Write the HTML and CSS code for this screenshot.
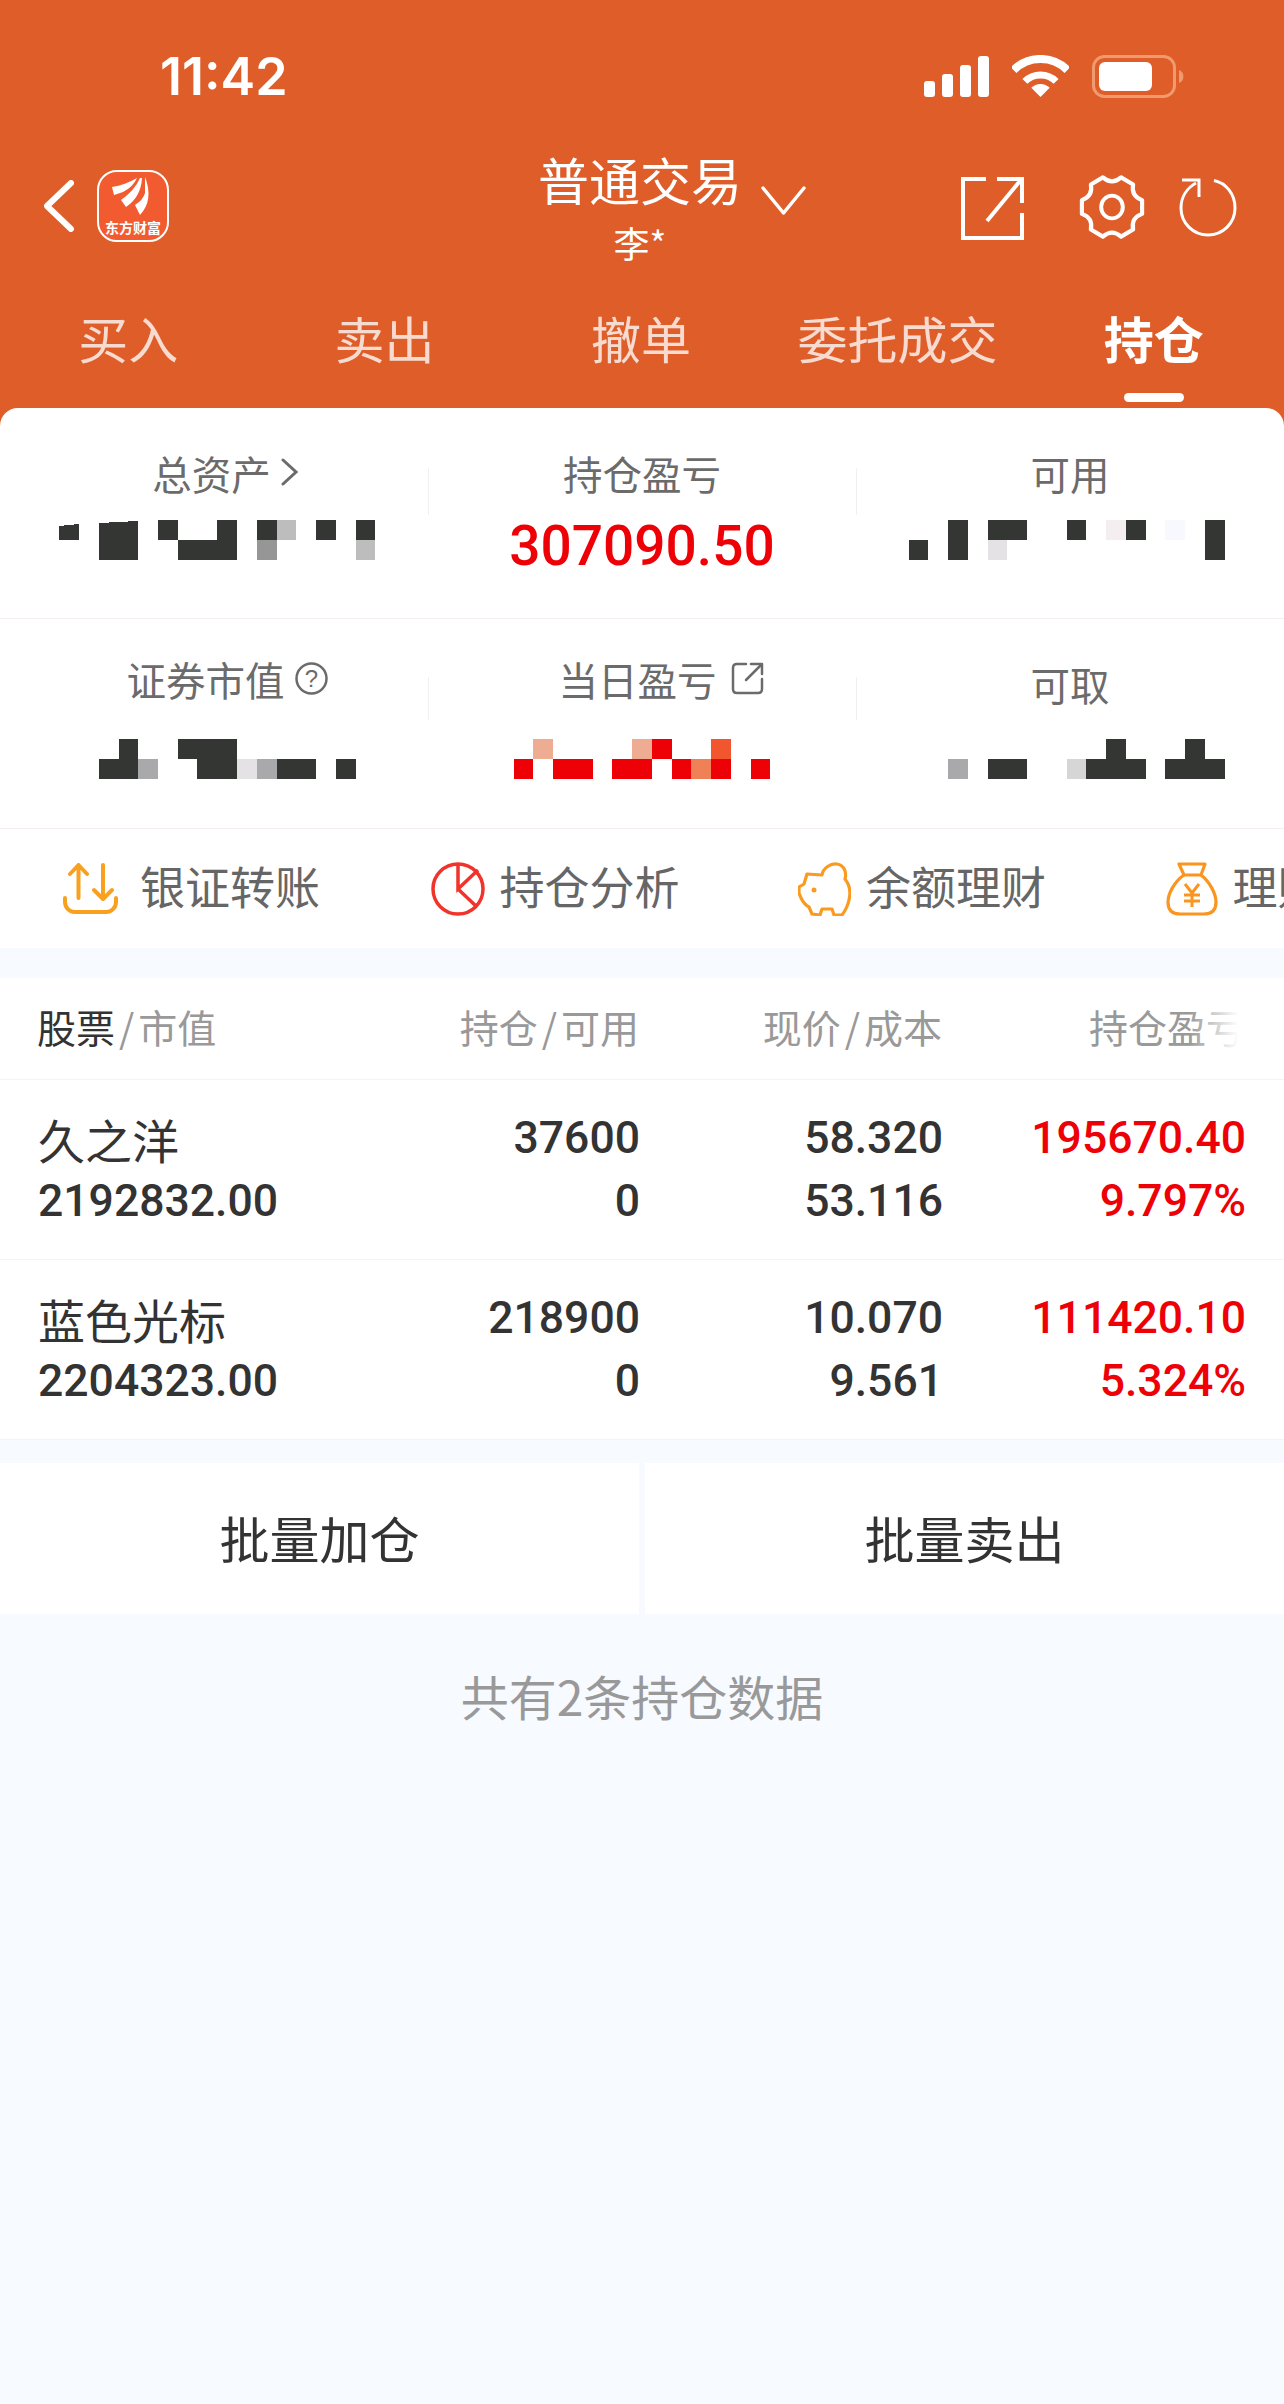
FILE: index.html
```html
<!DOCTYPE html>
<html lang="zh-CN">
  <head>
    <meta charset="utf-8">
    <title>持仓</title>
    <link rel="stylesheet" href="styles.css">
  </head>
  <body>
    <header class="top">
      <div class="status">
        <span class="time">11:42</span>
        <svg class="signal" width="65" height="41" viewBox="0 0 65 41" fill="#fff">
          <rect x="0" y="25" width="11" height="16" rx="3"/>
          <rect x="18" y="18" width="11" height="23" rx="3"/>
          <rect x="36" y="9" width="11" height="32" rx="3"/>
          <rect x="54" y="0" width="11" height="41" rx="3"/>
        </svg>
        <svg class="wifi" width="57" height="42" viewBox="0 0 57 42" fill="none" stroke="#fff">
          <path d="M1.6 15.1A38 38 0 0 1 55.4 15.1" stroke-width="8"/>
          <path d="M12.9 26.4A22 22 0 0 1 44.1 26.4" stroke-width="7"/>
          <path d="M28.5 42L19.3 32.8A13 13 0 0 1 37.7 32.8Z" fill="#fff" stroke="none"/>
        </svg>
        <svg class="battery" width="93" height="43" viewBox="0 0 93 43">
          <rect x="1.5" y="1.5" width="81" height="40" rx="11" fill="none" stroke="#f09a70" stroke-width="3"/>
          <rect x="7" y="7" width="53" height="29" rx="6" fill="#fff"/>
          <path d="M87 15a7 7 0 0 1 0 13z" fill="#f09a70"/>
        </svg>
      </div>

      <div class="nav">
        <div class="nav-left">
          <svg width="30" height="52" viewBox="0 0 30 52" fill="none" stroke="#fff" stroke-width="6" stroke-linecap="round" stroke-linejoin="round">
            <path d="M27 3L3 26L27 49"/>
          </svg>
          <div class="logo">
            <svg width="68" height="46" viewBox="2 2 68 46" fill="#fff">
              <path d="M15 17Q28 15 40 8Q36 17 26 22L17 25Z"/>
              <path d="M43 8Q38 20 24 30L29 37Q44 27 45 8Z"/>
              <path d="M48 7Q48 16 48 23Q46 30 38 35L43 45Q57 30 48 7Z"/>
            </svg>
            <span class="logo-name">东方财富</span>
          </div>
        </div>
        <div class="nav-title">
          <div class="title">普通交易</div>
          <div class="user">李*</div>
        </div>
        <div class="nav-right">
          <svg class="title-arrow" width="45" height="29" viewBox="0 0 45 29" fill="none" stroke="#fff" stroke-width="3.5" stroke-linecap="round" stroke-linejoin="round">
            <path d="M2 2L22.5 27L43 2"/>
          </svg>
          <svg class="share" width="63" height="63" viewBox="0 0 63 63" fill="none" stroke="#fff" stroke-width="4">
            <path d="M25 2H2V61H61V36"/>
            <path d="M36 2H61V26"/>
            <path d="M26 44L59 4"/>
          </svg>
          <svg class="gear" width="68" height="66" viewBox="-32 -32 64 64" fill="none" stroke="#fff" stroke-width="4" stroke-linejoin="round">
            <path d="M29.2 -6.7L29.2 6.7Q18.2 10.5 20.5 21.9L8.8 28.7Q0 21 -8.8 28.7L-20.5 21.9Q-18.2 10.5 -29.2 6.7L-29.2 -6.7Q-18.2 -10.5 -20.5 -21.9L-8.8 -28.7Q0 -21 8.8 -28.7L20.5 -21.9Q18.2 -10.5 29.2 -6.7Z"/>
            <ellipse cx="0" cy="0" rx="10.5" ry="11" stroke-width="3.8"/>
          </svg>
          <svg class="refresh" width="58" height="60" viewBox="0 0 58 60" fill="none" stroke="#fff" stroke-width="3">
            <path d="M35 3.5C47 6 56 17 56 31C56 46 44 58 29 58C14 58 2 46 2 31C2 20 8 11 17 6"/>
            <path d="M3 3H20V20"/>
          </svg>
        </div>
      </div>

      <nav class="tabs">
        <div class="tab">买入</div>
        <div class="tab">卖出</div>
        <div class="tab">撤单</div>
        <div class="tab">委托成交</div>
        <div class="tab active">持仓</div>
      </nav>
    </header>

    <section class="assets">
      <div class="asset-row">
        <div class="cell">
          <div class="label shift-a">总资产
            <svg width="17" height="28" viewBox="0 0 17 28" fill="none" stroke="#6b6b6b" stroke-width="3" stroke-linecap="round">
              <path d="M2 2L15 14L2 26"/>
            </svg>
          </div>
          <svg class="blur" width="428" height="40" viewBox="0 0 428 40" shape-rendering="crispEdges">
            <path d="M59 6L79 4V20H59Z" fill="#343634"/>
            <path d="M99 3L138 1V40H99Z" fill="#343634"/>
            <rect x="158" y="0" width="20" height="20" fill="#343634"/>
            <rect x="178" y="20" width="59" height="20" fill="#343634"/>
            <rect x="217" y="0" width="20" height="20" fill="#343634"/>
            <rect x="257" y="0" width="20" height="20" fill="#343634"/>
            <rect x="257" y="20" width="20" height="20" fill="#959695"/>
            <rect x="277" y="0" width="19" height="20" fill="#bdbdbd"/>
            <rect x="316" y="0" width="20" height="20" fill="#343634"/>
            <rect x="356" y="0" width="19" height="20" fill="#343634"/>
            <rect x="356" y="20" width="19" height="20" fill="#bdbdbd"/>
          </svg>
        </div>
        <div class="cell">
          <div class="label">持仓盈亏</div>
          <div class="profit">307090.50</div>
        </div>
        <div class="cell">
          <div class="label">可用</div>
          <svg class="blur" width="428" height="40" viewBox="0 0 428 40" shape-rendering="crispEdges">
            <rect x="53" y="20" width="19" height="20" fill="#343634"/>
            <rect x="92" y="0" width="20" height="40" fill="#343634"/>
            <rect x="132" y="0" width="39" height="20" fill="#343634"/>
            <rect x="132" y="20" width="19" height="20" fill="#e5e2e6"/>
            <rect x="211" y="0" width="19" height="20" fill="#343634"/>
            <rect x="250" y="0" width="20" height="20" fill="#f5eef0"/>
            <rect x="270" y="0" width="20" height="20" fill="#343634"/>
            <rect x="309" y="0" width="20" height="20" fill="#f8f8ff"/>
            <rect x="349" y="0" width="20" height="40" fill="#343634"/>
          </svg>
        </div>
      </div>

      <div class="asset-row">
        <div class="cell">
          <div class="label shift-b">证券市值
            <svg width="33" height="33" viewBox="0 0 33 33">
              <circle cx="16.5" cy="16.5" r="15" fill="none" stroke="#6b6b6b" stroke-width="2.5"/>
              <text x="16.5" y="25" text-anchor="middle" class="help">?</text>
            </svg>
          </div>
          <svg class="blur" width="428" height="40" viewBox="0 0 428 40" shape-rendering="crispEdges">
            <rect x="119" y="0" width="19" height="20" fill="#343634"/>
            <rect x="178" y="0" width="59" height="20" fill="#343634"/>
            <rect x="99" y="20" width="39" height="20" fill="#343634"/>
            <rect x="138" y="20" width="20" height="20" fill="#a9a8aa"/>
            <rect x="197" y="20" width="40" height="20" fill="#343634"/>
            <rect x="237" y="20" width="20" height="20" fill="#e5e2e6"/>
            <rect x="257" y="20" width="20" height="20" fill="#a9a8aa"/>
            <rect x="277" y="20" width="39" height="20" fill="#343634"/>
            <rect x="336" y="20" width="20" height="20" fill="#343634"/>
          </svg>
        </div>
        <div class="cell">
          <div class="label shift-c">当日盈亏
            <svg width="33" height="33" viewBox="0 0 33 33" fill="none" stroke="#6b6b6b" stroke-width="2.5" stroke-linecap="round" stroke-linejoin="round">
              <path d="M15 2H6Q2 2 2 6V27Q2 31 6 31H27Q31 31 31 27V17"/>
              <path d="M20 2H31V12"/>
              <path d="M15 18L30 3"/>
            </svg>
          </div>
          <svg class="blur" width="428" height="40" viewBox="0 0 428 40" shape-rendering="crispEdges">
            <rect x="105" y="0" width="20" height="20" fill="#eeac93"/>
            <rect x="204" y="0" width="20" height="20" fill="#eeac93"/>
            <rect x="224" y="0" width="20" height="20" fill="#ee0007"/>
            <rect x="283" y="0" width="20" height="20" fill="#f2562f"/>
            <rect x="86" y="20" width="19" height="20" fill="#ee0007"/>
            <rect x="125" y="20" width="40" height="20" fill="#ee0007"/>
            <rect x="184" y="20" width="40" height="20" fill="#ee0007"/>
            <rect x="244" y="20" width="19" height="20" fill="#ee0007"/>
            <rect x="263" y="20" width="20" height="20" fill="#f08055"/>
            <rect x="283" y="20" width="20" height="20" fill="#ee0007"/>
            <rect x="323" y="20" width="19" height="20" fill="#ee0007"/>
          </svg>
        </div>
        <div class="cell">
          <div class="label label-low">可取</div>
          <svg class="blur" width="428" height="40" viewBox="0 0 428 40" shape-rendering="crispEdges">
            <rect x="92" y="20" width="20" height="20" fill="#a9a8aa"/>
            <rect x="132" y="20" width="39" height="20" fill="#343634"/>
            <rect x="211" y="20" width="19" height="20" fill="#d6d6d6"/>
            <rect x="230" y="20" width="60" height="20" fill="#343634"/>
            <rect x="250" y="0" width="20" height="20" fill="#343634"/>
            <rect x="309" y="20" width="60" height="20" fill="#343634"/>
            <rect x="329" y="0" width="20" height="20" fill="#343634"/>
          </svg>
        </div>
      </div>
    </section>

    <section class="shortcuts">
      <div class="shortcut first">
        <svg width="55" height="51" viewBox="0 0 55 51" fill="none" stroke="#f9a11f" stroke-width="4" stroke-linecap="round" stroke-linejoin="round">
          <path d="M15.5 3V35M7 11L15.5 2L24 11"/>
          <path d="M40 2V35M31 27L40 36L49 27"/>
          <path d="M2 35V39A10 10 0 0 0 12 49H43A10 10 0 0 0 53 39V35"/>
        </svg>
        <span>银证转账</span>
      </div>
      <div class="shortcut">
        <svg width="54" height="54" viewBox="0 0 54 54" fill="none" stroke="#f0342b" stroke-width="3.5">
          <circle cx="27" cy="27" r="25"/>
          <path d="M27 2V27L47 8M27 27L46 45"/>
        </svg>
        <span>持仓分析</span>
      </div>
      <div class="shortcut">
        <svg width="53" height="54" viewBox="0 0 53 54" fill="none" stroke="#fa9a1e" stroke-width="3.2" stroke-linejoin="round">
          <path d="M9 12L24 13C25 6 33 1 39 2C46 3 49 10 47 17C51 22 53 30 51 38C50 43 47 49 44 53L36 53L34 47L24 47L22 53L14 52L11 45C7 43 5 40 3 36L1 31L1 25L6 22Z"/>
          <circle cx="16" cy="28" r="2.5" fill="#fa9a1e" stroke="none"/>
        </svg>
        <span>余额理财</span>
      </div>
      <div class="shortcut">
        <svg width="52" height="54" viewBox="0 0 52 54" fill="none" stroke="#fa9520" stroke-width="3.2" stroke-linejoin="round">
          <path d="M13 2H39L35 13H18Z"/>
          <path d="M18 13C8 20 2 32 2 40C2 48 6 52 14 52H38C46 52 50 48 50 40C50 32 44 20 35 13"/>
          <path d="M19 22L26 31L33 22M26 31V45M18 33H34M18 39H34" stroke-width="3"/>
        </svg>
        <span>理财产品</span>
      </div>
    </section>

    <section class="holdings">
      <div class="table-head">
        <div><b>股票</b><i>/</i>市值</div>
        <div class="num">持仓<i>/</i>可用</div>
        <div class="num">现价<i>/</i>成本</div>
        <div class="num fade">持仓盈亏</div>
      </div>
      <div class="stock">
        <div>
          <div class="name">久之洋</div>
          <div class="val">2192832.00</div>
        </div>
        <div class="num">
          <div class="val">37600</div>
          <div class="val">0</div>
        </div>
        <div class="num">
          <div class="val">58.320</div>
          <div class="val">53.116</div>
        </div>
        <div class="num red">
          <div class="val">195670.40</div>
          <div class="val">9.797%</div>
        </div>
      </div>
      <div class="stock">
        <div>
          <div class="name">蓝色光标</div>
          <div class="val">2204323.00</div>
        </div>
        <div class="num">
          <div class="val">218900</div>
          <div class="val">0</div>
        </div>
        <div class="num">
          <div class="val">10.070</div>
          <div class="val">9.561</div>
        </div>
        <div class="num red">
          <div class="val">111420.10</div>
          <div class="val">5.324%</div>
        </div>
      </div>
    </section>

    <div class="batch">
      <button class="batch-btn">批量加仓</button>
      <button class="batch-btn">批量卖出</button>
    </div>

    <p class="note">共有2条持仓数据</p>
  </body>
</html>
```

FILE: styles.css
```css
* {
  box-sizing: border-box;
}
body {
  margin: 0;
  min-height: 2404px;
  background-color: #f7faff;
  font-family: "Noto Sans CJK SC", "Liberation Sans", sans-serif;
  color: #333;
  overflow-x: hidden;
}

/* orange header */
.top {
  background-color: #df5d29;
  color: #fff;
  height: 428px;
}
.status {
  display: flex;
  align-items: center;
  height: 152px;
  padding-left: 160px;
}
.time {
  font-family: Inter, "Liberation Sans", sans-serif;
  font-size: 52px;
  font-weight: 600;
  width: 764px;
}
.wifi {
  margin-left: 23px;
}
.battery {
  margin-left: 23px;
}
.nav {
  display: grid;
  grid-template-columns: 534px 212px 1fr;
  height: 148px;
}
.nav-left {
  display: flex;
  align-items: flex-start;
  padding: 28px 0 0 44px;
}
.logo {
  width: 72px;
  height: 72px;
  margin: -10px 0 0 23px;
  border: 2px solid #fff;
  border-radius: 20px;
  background-color: #f25a30;
  overflow: hidden;
}
.logo svg {
  display: block;
}
.logo-name {
  display: block;
  font-size: 14px;
  line-height: 18px;
  font-weight: 700;
  text-align: center;
  white-space: nowrap;
}
.title {
  font-size: 51px;
  line-height: 54px;
  text-align: center;
  white-space: nowrap;
}
.user {
  font-size: 36px;
  line-height: 40px;
  margin-top: 16px;
  text-align: center;
}
.nav-right {
  display: flex;
  align-items: flex-start;
  padding: 25px 0 0 15px;
}
.title-arrow {
  margin-top: 9px;
}
.share {
  margin-left: 155px;
}
.gear {
  margin-left: 54px;
  margin-top: -3px;
}
.refresh {
  margin-left: 33px;
}
.tabs {
  display: grid;
  grid-template-columns: repeat(5, 1fr);
  padding-right: 2px;
}
.tab {
  font-size: 50px;
  line-height: 74px;
  text-align: center;
  color: rgba(255, 255, 255, 0.78);
}
.tab.active {
  color: #fff;
  font-weight: 700;
}
.tab.active::after {
  content: "";
  display: block;
  width: 60px;
  height: 9px;
  margin: 19px auto 0;
  border-radius: 5px;
  background-color: #fff;
}

/* totals card */
.assets {
  position: relative;
  margin-top: -20px;
  border-radius: 18px 18px 0 0;
  background-color: #fff;
}
.asset-row {
  display: grid;
  grid-template-columns: repeat(3, 428px);
  height: 211px;
  padding-top: 39px;
  border-bottom: 1px solid #f5eef0;
}
.asset-row + .asset-row {
  height: 210px;
  padding-top: 34px;
}
.cell {
  position: relative;
}
.cell + .cell::before {
  content: "";
  position: absolute;
  left: 0;
  top: 21px;
  width: 1px;
  height: 47px;
  background-color: #f0f0f0;
}
.asset-row + .asset-row .cell + .cell::before {
  top: 24px;
  height: 43px;
}
.label {
  display: flex;
  justify-content: center;
  align-items: center;
  gap: 10px;
  height: 50px;
  font-size: 39.5px;
  color: #6b6b6b;
}
.shift-a {
  padding-left: 22px;
}
.shift-b {
  padding-left: 26px;
}
.shift-c {
  padding-left: 38px;
  gap: 14px;
}
.label-low {
  padding-top: 10px;
}
.blur {
  display: block;
  margin-top: 23px;
}
.asset-row + .asset-row .blur {
  margin-top: 36px;
}
.profit {
  margin-top: 14px;
  font-family: Roboto, "Liberation Sans", sans-serif;
  font-size: 55px;
  font-weight: 500;
  line-height: 70px;
  text-align: center;
  color: #ee0007;
}

/* shortcuts */
.shortcuts {
  display: flex;
  height: 119px;
  padding-left: 63px;
  background-color: #fff;
  overflow: hidden;
}
.shortcut {
  display: flex;
  flex: none;
  align-items: center;
  gap: 15px;
  width: 367.5px;
  font-size: 45px;
  color: #666;
}
.shortcut.first {
  gap: 22px;
}
.shortcut span {
  padding-bottom: 6px;
  white-space: nowrap;
}

/* holdings table */
.holdings {
  margin-top: 30px;
  background-color: #fff;
}
.table-head,
.stock {
  display: grid;
  grid-template-columns: 262px 340px 303px 303px;
  padding: 0 38px;
  align-items: center;
}
.table-head {
  height: 102px;
  padding: 0 38px 5px 37px;
  border-bottom: 1px solid #f3f3f8;
  font-size: 39px;
  color: #999;
}
.table-head b {
  font-weight: 400;
  color: #333;
}
.table-head i {
  margin: 0 4px;
  font-style: normal;
}
.fade {
  position: relative;
}
.fade::after {
  content: "";
  position: absolute;
  top: 0;
  right: -2px;
  width: 58px;
  height: 100%;
  background: linear-gradient(to right, rgba(255, 255, 255, 0), #fff 85%);
}
.stock {
  height: 180px;
  border-bottom: 1px solid #f3f3f6;
}
.stock + .stock {
  border-bottom-color: #fbeff0;
}
.num {
  text-align: right;
}
.red {
  color: #ee0007;
}
.name {
  font-size: 47px;
  line-height: 63px;
  white-space: nowrap;
}
.val {
  font-family: Roboto, "Liberation Sans", sans-serif;
  font-size: 44.5px;
  font-weight: 500;
  line-height: 63px;
}

/* batch buttons */
.batch {
  display: flex;
  gap: 6px;
  margin-top: 23px;
}
.batch-btn {
  flex: 1;
  height: 151px;
  padding: 0 0 3px;
  border: 0;
  background-color: #fff;
  font-family: inherit;
  font-size: 50px;
  color: #333;
}
.note {
  margin: 51px 0 0;
  font-size: 48px;
  line-height: 60px;
  text-align: center;
  color: #999;
}
.help {
  font-family: "Liberation Sans", sans-serif;
  font-size: 24px;
  fill: #6b6b6b;
}
```
